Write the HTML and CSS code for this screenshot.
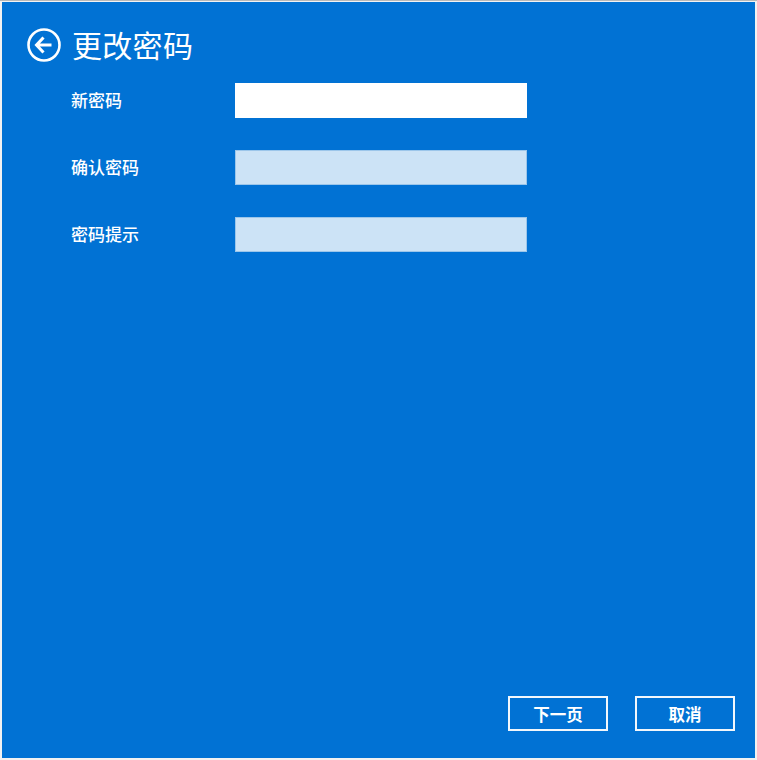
FILE: index.html
```html
<!DOCTYPE html>
<html lang="zh-CN">
<head>
<meta charset="utf-8">
<title>更改密码</title>
<link rel="stylesheet" href="styles.css">
</head>
<body>
<div class="panel">
  <header class="header">
    <button class="back" aria-label="返回">
      <svg width="34" height="34" viewBox="0 0 34 34">
        <circle cx="17" cy="17" r="15.5" fill="none" stroke="#fff" stroke-width="2.6"/>
        <path d="M9.5 17 H24.5 M16.5 9.5 L9.5 17 L16.5 24.5" fill="none" stroke="#fff" stroke-width="3" stroke-linecap="butt" stroke-linejoin="miter"/>
      </svg>
    </button>
    <h1 class="title">更改密码</h1>
  </header>
  <div class="form">
    <div class="row">
      <label class="label">新密码</label>
      <input class="field field-active" type="password">
    </div>
    <div class="row">
      <label class="label">确认密码</label>
      <input class="field" type="password">
    </div>
    <div class="row">
      <label class="label">密码提示</label>
      <input class="field" type="text">
    </div>
  </div>
  <div class="actions">
    <button class="btn">下一页</button>
    <button class="btn">取消</button>
  </div>
</div>
</body>
</html>
```
FILE: styles.css
```css
html, body {
  margin: 0;
  padding: 0;
  background: #f2f2f2;
}
body {
  border-top: 1px solid #b9b9b9;
  font-family: "Noto Sans CJK SC", "Noto Sans", sans-serif;
}
.panel {
  box-sizing: border-box;
  height: 756px;
  margin: 1px 2px 2px 2px;
  background: #0172d4;
  display: flex;
  flex-direction: column;
  padding: 26px 20px 27px 25px;
}
.header {
  display: flex;
  align-items: center;
  gap: 11px;
  height: 34px;
}
.back {
  width: 34px;
  height: 34px;
  padding: 0;
  border: 0;
  background: none;
  display: block;
}
.back svg { display: block; }
.title {
  margin: -3px 0 0 0;
  color: #fff;
  font-size: 30px;
  font-weight: 400;
  line-height: 34px;
  letter-spacing: 0.3px;
}
.form {
  display: flex;
  flex-direction: column;
  gap: 32px;
  margin-top: 21px;
  padding-left: 44px;
}
.row {
  display: flex;
  align-items: center;
  height: 35px;
}
.label {
  width: 164px;
  margin-top: -2px;
  color: #fff;
  font-size: 17px;
  font-weight: 500;
  line-height: 20px;
}
.field {
  box-sizing: border-box;
  width: 292px;
  height: 35px;
  margin: 0;
  border: 1px solid #9cc6ea;
  background: #cce3f6;
  outline: none;
  padding: 0 8px;
}
.field-active {
  background: #ffffff;
  border-color: #ffffff;
}
.actions {
  margin-top: auto;
  display: flex;
  justify-content: flex-end;
  gap: 27px;
}
.btn {
  box-sizing: border-box;
  width: 100px;
  height: 35px;
  border: 2px solid #f2f7fc;
  background: #0172d4;
  color: #fff;
  font-family: "Noto Sans CJK SC", "Noto Sans", sans-serif;
  font-size: 16.5px;
  font-weight: 700;
  padding: 0;
}
```
